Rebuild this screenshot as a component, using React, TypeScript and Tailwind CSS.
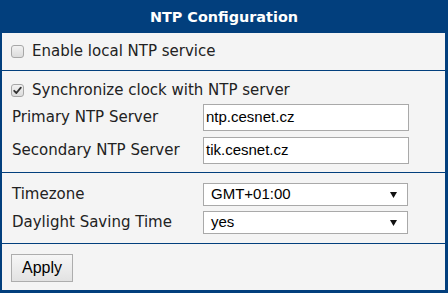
import React from "react";

const labelFont = { fontFamily: '"DejaVu Sans", Verdana, sans-serif' };
const inputFont = { fontFamily: '"Liberation Sans", Arial, sans-serif' };

function Check({ checked }: { checked?: boolean }) {
  return (
    <span className="flex h-[13px] w-[13px] items-center justify-center rounded-[3px] border border-[#a7a7a7] bg-gradient-to-b from-[#f2f2f2] to-[#dcdcdc]">
      {checked && (
        <svg width="9" height="9" viewBox="0 0 9 9">
          <path d="M1.2 4.8 L3.4 7 L7.8 1.6" fill="none" stroke="#333" strokeWidth="1.8" strokeLinecap="round" strokeLinejoin="round" />
        </svg>
      )}
    </span>
  );
}

function Arrow() {
  return (
    <svg width="7" height="6" viewBox="0 0 7 6">
      <path d="M0 0 H7 L3.5 6 Z" fill="#111" />
    </svg>
  );
}

export default function App() {
  return (
    <div className="flex h-[293px] w-[448px] flex-col gap-px bg-[#023f7d] pb-[3px] pl-[2px] pr-[3px] text-[#222]">
      <div className="-ml-[2px] -mr-[3px] flex h-[32px] shrink-0 items-center justify-center pt-[3px] text-[14.4px] font-bold text-white" style={labelFont}>
        NTP Configuration
      </div>
      <div className="flex h-[37px] shrink-0 items-center bg-[#f4f4f4] pl-[9px]" style={labelFont}>
        <Check />
        <span className="ml-[8px] text-[15px]">Enable local NTP service</span>
      </div>
      <div className="flex h-[101px] shrink-0 flex-col bg-[#f4f4f4] pl-[10px] pt-[10px]" style={labelFont}>
        <div className="flex h-[18px] items-center">
          <span className="-ml-px"><Check checked /></span>
          <span className="ml-[8px] text-[15px]">Synchronize clock with NTP server</span>
        </div>
        <div className="mt-[5px] flex flex-col gap-[6px]">
          <div className="flex items-center">
            <span className="w-[191px] text-[15px]">Primary NTP Server</span>
            <div className="flex h-[27px] w-[206px] items-center border border-[#a9a9a9] bg-white pl-[2px] text-[15px] text-black" style={inputFont}>
              ntp.cesnet.cz
            </div>
          </div>
          <div className="flex items-center">
            <span className="w-[191px] text-[15px]">Secondary NTP Server</span>
            <div className="flex h-[27px] w-[206px] items-center border border-[#a9a9a9] bg-white pl-[2px] text-[15px] text-black" style={inputFont}>
              tik.cesnet.cz
            </div>
          </div>
        </div>
      </div>
      <div className="flex h-[70px] shrink-0 flex-col gap-[5px] bg-[#f4f4f4] pl-[10px] pt-[10px]" style={labelFont}>
        <div className="flex items-center">
          <span className="w-[191px] text-[15px]">Timezone</span>
          <div className="flex h-[23px] w-[205px] items-center justify-between border border-[#a9a9a9] bg-white pl-[7px] pr-[10px] text-[15px] text-black" style={inputFont}>
            <span>GMT+01:00</span>
            <Arrow />
          </div>
        </div>
        <div className="flex items-center">
          <span className="w-[191px] text-[15px]">Daylight Saving Time</span>
          <div className="flex h-[23px] w-[205px] items-center justify-between border border-[#a9a9a9] bg-white pl-[7px] pr-[10px] text-[15px] text-black" style={inputFont}>
            <span>yes</span>
            <Arrow />
          </div>
        </div>
      </div>
      <div className="flex flex-1 items-start bg-[#f4f4f4] pl-[9px] pt-[10px]">
        <button className="flex h-[28px] w-[62px] items-center justify-center border border-[#adadad] bg-gradient-to-b from-[#f6f6f6] to-[#e2e2e2] text-[16px] text-black" style={inputFont}>
          Apply
        </button>
      </div>
    </div>
  );
}
